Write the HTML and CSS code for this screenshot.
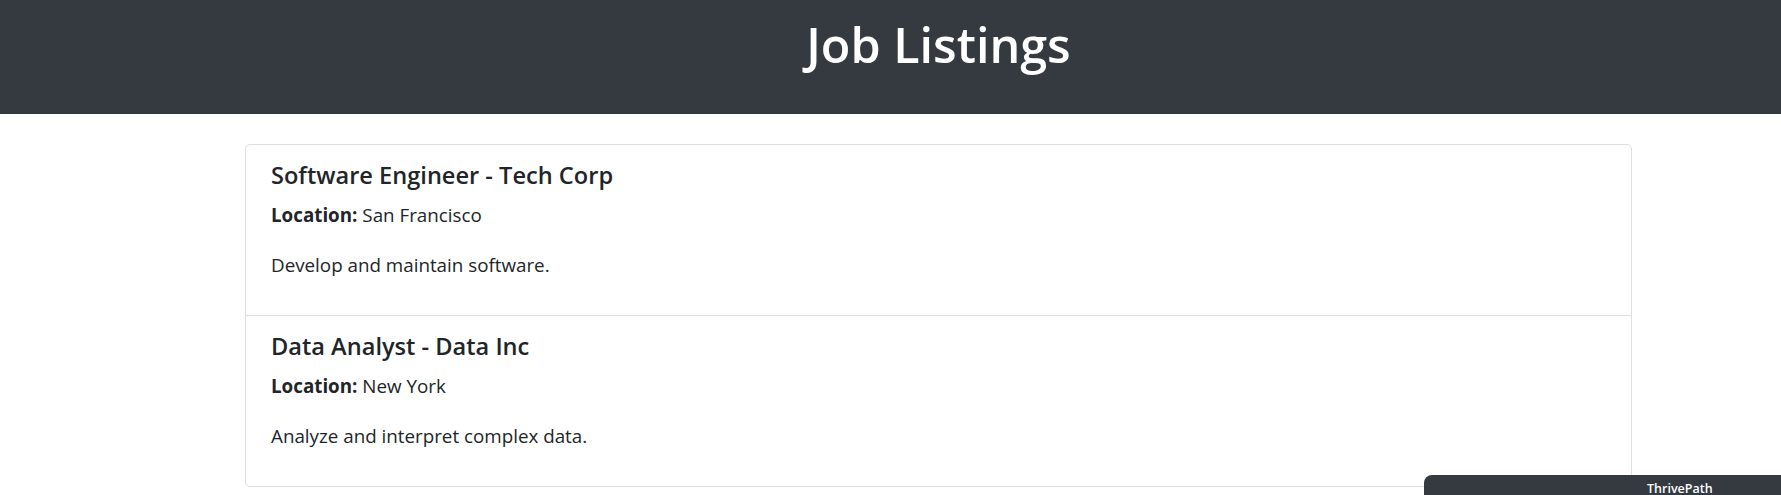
FILE: index.html
```html
<!DOCTYPE html>
<html lang="en">
<head>
<meta charset="utf-8">
<title>Job Listings</title>
<link rel="stylesheet" href="styles.css">
</head>
<body>
<header class="site-header">
  <div class="container">
    <h1 class="site-title">Job Listings</h1>
  </div>
</header>
<main class="container">
  <ul class="job-list">
    <li class="job">
      <h5 class="job-title">Software Engineer - Tech Corp</h5>
      <p class="job-text"><strong>Location:</strong> San Francisco</p>
      <p class="job-text">Develop and maintain software.</p>
    </li>
    <li class="job">
      <h5 class="job-title">Data Analyst - Data Inc</h5>
      <p class="job-text"><strong>Location:</strong> New York</p>
      <p class="job-text">Analyze and interpret complex data.</p>
    </li>
  </ul>
</main>
<div class="brand-badge">ThrivePath</div>
</body>
</html>
```
FILE: styles.css
```css
html, body {
  margin: 0;
  padding: 0;
  background: #fff;
}
body {
  font-family: "Open Sans", "Noto Sans", sans-serif;
  color: #212529;
  overflow: hidden;
}
.container {
  width: 1387px;
  margin-left: 245px;
}
.site-header {
  background: #343a40;
  color: #fff;
  height: 114px;
  box-sizing: border-box;
  padding-top: 14px;
}
.site-title {
  margin: 0;
  font-size: 48.5px;
  line-height: 60px;
  font-weight: 600;
  text-align: center;
}
.job-list {
  list-style: none;
  margin: 30px 0 0;
  padding: 0;
  border: 1px solid #dfdfdf;
  border-radius: 5px;
}
.job {
  padding: 15px 25px;
}
.job + .job {
  border-top: 1px solid #dfdfdf;
}
.job-title {
  margin: 0 0 10px;
  font-size: 23.6px;
  line-height: 30px;
  font-weight: 600;
}
.job-text {
  margin: 0 0 20px;
  font-size: 18.8px;
  line-height: 30px;
}
.job-text strong {
  font-weight: 700;
}
.brand-badge {
  position: fixed;
  left: 1424px;
  right: 0;
  top: 475px;
  height: 40px;
  box-sizing: border-box;
  padding: 6px 0 0 223px;
  background: #343a40;
  border-top-left-radius: 8px;
  color: #fff;
  font-size: 12.5px;
  font-weight: 600;
  line-height: 16px;
}
```
